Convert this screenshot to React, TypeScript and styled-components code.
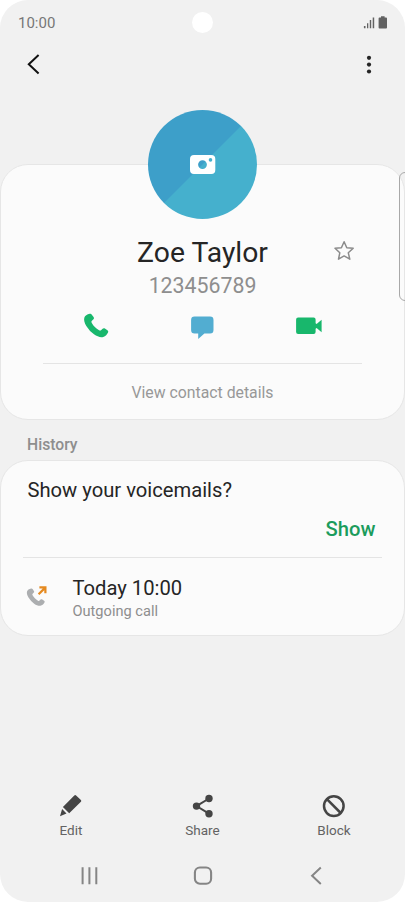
import React from 'react';
import styled, { createGlobalStyle } from 'styled-components';

const GlobalStyle = createGlobalStyle`
  * { box-sizing: border-box; }
  body { margin: 0; background: #fff; }
  svg { display: block; flex: none; }
  button { border: 0; padding: 0; background: none; font: inherit; color: inherit; display: block; }
`;

const Phone = styled.main`
  position: relative;
  display: flex;
  flex-direction: column;
  width: 405px;
  height: 902px;
  overflow: hidden;
  border-radius: 28px;
  background: #f1f1f1;
  font-family: Roboto, sans-serif;
  color: #252525;
`;

const StatusBar = styled.header`
  display: grid;
  grid-template-columns: 1fr 21px 1fr;
  align-items: center;
  height: 45px;
  padding: 0 18px;
`;

const CameraHole = styled.div`
  width: 21px;
  height: 21px;
  border-radius: 50%;
  background: #fff;
`;

const StatusIcons = styled.div`
  display: flex;
  justify-content: flex-end;
  margin-right: -1px;
`;

const Toolbar = styled.nav`
  display: flex;
  align-items: flex-start;
  justify-content: space-between;
  height: 119px;
  padding: 7px 28px 0 26px;
`;

const Card = styled.section<{ $height: number }>`
  display: flex;
  flex-direction: column;
  flex: none;
  height: ${p => p.$height}px;
  border: 1px solid #e6e6e6;
  border-radius: 28px;
  background: #fbfbfb;
`;

const Avatar = styled.button`
  && { display: flex; }
  align-self: center;
  align-items: center;
  justify-content: center;
  flex: none;
  width: 109px;
  height: 109px;
  margin-top: -55px;
  border-radius: 50%;
  background: linear-gradient(135deg, #3d9fc9 49.8%, #45b0cd 50.2%);
`;

const Text = styled.span<{ $size: number; $line: number; $color?: string; $weight?: number }>`
  display: block;
  white-space: nowrap;
  font-size: ${p => p.$size}px;
  line-height: ${p => p.$line}px;
  color: ${p => p.$color ?? '#252525'};
  font-weight: ${p => p.$weight ?? 400};
`;

const NameRow = styled.div`
  display: grid;
  grid-template-columns: 1fr auto 1fr;
  align-items: center;
  height: 36px;
  margin-top: 16px;
`;

const Favorite = styled.button`
  justify-self: end;
  margin: 0 49px 4px 0;
`;

const NumberRow = styled.div`
  display: flex;
  justify-content: center;
  height: 30px;
`;

const Actions = styled.div`
  display: flex;
  align-items: flex-start;
  justify-content: space-between;
  height: 62px;
  padding: 11px 81px 0 80px;
`;

const Divider = styled.hr<{ $left: number; $right: number }>`
  flex: none;
  width: auto;
  height: 1px;
  border: 0;
  margin: 0 ${p => p.$right}px 0 ${p => p.$left}px;
  background: #e4e4e4;
`;

const DetailsButton = styled.button`
  align-self: center;
  margin-top: 18px;
`;

const SectionTitle = styled.h2`
  height: 40px;
  margin: 0;
  padding: 14px 27px 0;
`;

const Prompt = styled.div`
  display: flex;
  flex-direction: column;
  height: 96px;
  padding: 17px 28.5px 0 26.5px;
`;

const ShowButton = styled.button`
  align-self: flex-end;
  margin-top: 15px;
`;

const CallRow = styled.div`
  display: flex;
  align-items: flex-start;
  padding: 17px 0 0 24px;
`;

const OutgoingBadge = styled.div`
  padding-top: 8px;
`;

const CallText = styled.div`
  margin-left: 23.5px;
`;

const BottomActions = styled.nav`
  display: grid;
  grid-template-columns: repeat(3, 131.5px);
  align-items: start;
  justify-content: center;
  height: 58px;
  margin-top: auto;
`;

const BottomAction = styled.button`
  && { display: flex; }
  flex-direction: column;
  align-items: center;
  gap: 2px;
`;

const SystemNav = styled.nav`
  display: grid;
  grid-template-columns: repeat(3, 113.5px);
  align-items: start;
  justify-content: center;
  justify-items: center;
  height: 50px;
  padding-top: 10px;
`;

const EdgeHandle = styled.div`
  position: absolute;
  top: 172px;
  right: -6px;
  width: 12px;
  height: 129px;
  border: 1.5px solid #a8a8a8;
  border-radius: 6px;
`;

const handset =
  'M5.6.3C6.6.1 7 .5 7.5 1.2l1.7 2.3c.6.9.5 1.6-.1 2.2L7.6 7.1c-.6.7-.6 1.3-.1 2.1 1.6 2.9 4 5.3 7 7 .8.5 1.5.4 2.1-.2l1.3-1.2c.7-.7 1.4-.7 2.2-.2l2.4 1.7c.8.6 1 1.2.6 2-.8 1.7-2.4 3.8-4.6 4.3-2.7.7-5.8-.3-8.9-2.5A29 29 0 0 1 2.2 12C.4 9.1-.3 6.4.3 4.2.9 2.2 2.9.8 5.6.3Z';

const StatusSignal = () => (
  <svg width="25" height="13" viewBox="0 0 25 13" fill="#626262">
    <path d="M.9 10h1.6v2.2H.9zM4 7.2h1.3v5H4zM6.8 4h1.4v8.2H6.8zM9.7 1.6h1.5v10.6H9.7z" />
    <path d="M18 .2h3.6v1.3h1.5c.6 0 .9.3.9.9v9.1c0 .6-.3.9-.9.9h-6.6c-.6 0-.9-.3-.9-.9V2.4c0-.6.3-.9.9-.9H18z" />
  </svg>
);

const BackIcon = () => (
  <svg width="16" height="24" viewBox="0 0 16 24" fill="none" stroke="#111" strokeWidth="2">
    <path d="m12.6 3-9.8 9.2 9.8 9.2" strokeLinejoin="miter" />
  </svg>
);

const MoreIcon = () => (
  <svg width="16" height="26" viewBox="0 0 16 26" fill="#252525">
    <circle cx="8" cy="5.8" r="2.1" /><circle cx="8" cy="12.6" r="2.1" /><circle cx="8" cy="19.5" r="2.1" />
  </svg>
);

const CameraIcon = () => (
  <svg width="26" height="19" viewBox="0 0 26 19">
    <path fill="#fff" fillRule="evenodd" d="M4 0h17.3q4 0 4 4v11q0 4-4 4H4q-4 0-4-4V4q0-4 4-4Zm8.5 5.2a4.4 4.4 0 1 0 0 8.8 4.4 4.4 0 0 0 0-8.8Zm8-2.1a1.8 1.8 0 1 0 0 3.6 1.8 1.8 0 0 0 0-3.6Z" />
  </svg>
);

const StarIcon = () => (
  <svg width="22" height="22" viewBox="0 0 22 22" fill="none" stroke="#8b8b8b" strokeWidth="1.5" strokeLinejoin="round">
    <path d="m11.1 1.7 2.7 6 6.4.6-4.9 4.5 1.5 6.4-5.7-3.3-5.6 3.3 1.3-6.4L2 8.3l6.4-.6z" />
  </svg>
);

const CallIcon = () => (
  <svg width="30" height="30" viewBox="0 0 30 30" fill="#18b76c"><path d={handset} transform="translate(3 1.4) scale(1.04)" /></svg>
);

const MessageIcon = () => (
  <svg width="30" height="30" viewBox="0 0 30 30" fill="#52add1">
    <path d="M7.5 4.6h15.6q3.4 0 3.4 3.4v10q0 3.6-3.4 3.6h-5.7L11.2 27v-5.4H7.5q-3.4 0-3.4-3.6V8q0-3.4 3.4-3.4Z" />
  </svg>
);

const VideoIcon = () => (
  <svg width="30" height="30" viewBox="0 0 30 30" fill="#18b76c">
    <path d="M5.1 5.4h15.5q2 0 2 2v3.8l1 .7L28.6 7.8v12.4L23.6 16l-1 .7v3.4q0 2-2 2H5.1q-2 0-2-2V7.4q0-2 2-2Z" />
  </svg>
);

const OutgoingIcon = () => (
  <svg width="24" height="26" viewBox="0 0 24 26">
    <path d={handset} fill="#acaeb0" transform="translate(1.8 5.2) scale(.77)" />
    <path d="m13.6 11.3 5.9-5.9M14.4 4.3h6v6" fill="none" stroke="#e58a20" strokeWidth="2.2" />
  </svg>
);

const EditIcon = () => (
  <svg width="24" height="24" viewBox="0 0 24 24" fill="#454545">
    <path d="m15.3 1.4q.9-.8 1.8 0l4.8 4.5q.9.9 0 1.8L10.2 19.2 3.9 13zM3.1 15.1l4.4 4.4L1 22.2z" />
  </svg>
);

const ShareIcon = () => (
  <svg width="24" height="24" viewBox="0 0 24 24">
    <path d="M18 4.5 5.5 12.1l12.5 7.6" fill="none" stroke="#454545" strokeWidth="2" />
    <g fill="#454545"><circle cx="18" cy="4.5" r="3.7" /><circle cx="5.5" cy="12.1" r="3.7" /><circle cx="18" cy="19.7" r="3.7" /></g>
  </svg>
);

const BlockIcon = () => (
  <svg width="24" height="24" viewBox="0 0 24 24" fill="none" stroke="#454545" strokeWidth="2.5">
    <circle cx="11.8" cy="12.1" r="9.8" /><path d="m4.9 5.2 13.8 13.8" />
  </svg>
);

const RecentsIcon = () => (
  <svg width="22" height="26" viewBox="0 0 22 26" stroke="#858585" strokeWidth="2">
    <path d="M4.6 5.2v17M11.4 5.2v17M18.3 5.2v17" />
  </svg>
);

const HomeIcon = () => (
  <svg width="22" height="26" viewBox="0 0 22 26" fill="none" stroke="#858585" strokeWidth="2.1">
    <rect x="2.9" y="5.5" width="16.2" height="16.3" rx="5" />
  </svg>
);

const SystemBackIcon = () => (
  <svg width="22" height="26" viewBox="0 0 22 26" fill="none" stroke="#858585" strokeWidth="2">
    <path d="m15.8 5.5-8.7 8.2 8.7 8.2" />
  </svg>
);

const bottomActions = [
  { label: 'Edit', Icon: EditIcon },
  { label: 'Share', Icon: ShareIcon },
  { label: 'Block', Icon: BlockIcon },
];

export default function App() {
  return (
    <>
      <GlobalStyle />
      <Phone>
        <StatusBar>
          <Text $size={15} $line={20} $color="#777">10:00</Text>
          <CameraHole />
          <StatusIcons><StatusSignal /></StatusIcons>
        </StatusBar>
        <Toolbar>
          <button aria-label="Back"><BackIcon /></button>
          <button aria-label="More options"><MoreIcon /></button>
        </Toolbar>
        <Card $height={256}>
          <Avatar aria-label="Change photo"><CameraIcon /></Avatar>
          <NameRow>
            <span />
            <Text $size={28.3} $line={36}>Zoe Taylor</Text>
            <Favorite aria-label="Favorite"><StarIcon /></Favorite>
          </NameRow>
          <NumberRow><Text $size={21.3} $line={30} $color="#8e8e8e">123456789</Text></NumberRow>
          <Actions>
            <button aria-label="Call"><CallIcon /></button>
            <button aria-label="Message"><MessageIcon /></button>
            <button aria-label="Video call"><VideoIcon /></button>
          </Actions>
          <Divider $left={42} $right={42} />
          <DetailsButton><Text $size={15.8} $line={22} $color="#989898">View contact details</Text></DetailsButton>
        </Card>
        <SectionTitle><Text $size={15.7} $line={22} $color="#8e8e8e" $weight={500}>History</Text></SectionTitle>
        <Card $height={176}>
          <Prompt>
            <Text $size={20.2} $line={24}>Show your voicemails?</Text>
            <ShowButton><Text $size={20.2} $line={24} $color="#1b9c5c" $weight={500}>Show</Text></ShowButton>
          </Prompt>
          <Divider $left={22} $right={22} />
          <CallRow>
            <OutgoingBadge><OutgoingIcon /></OutgoingBadge>
            <CallText>
              <Text $size={20.2} $line={26}>Today 10:00</Text>
              <Text $size={14.6} $line={20} $color="#8e8e8e">Outgoing call</Text>
            </CallText>
          </CallRow>
        </Card>
        <BottomActions>
          {bottomActions.map(({ label, Icon }) => (
            <BottomAction key={label}>
              <Icon />
              <Text $size={13.5} $line={20} $color="#636363">{label}</Text>
            </BottomAction>
          ))}
        </BottomActions>
        <SystemNav>
          <button aria-label="Recents"><RecentsIcon /></button>
          <button aria-label="Home"><HomeIcon /></button>
          <button aria-label="Back"><SystemBackIcon /></button>
        </SystemNav>
        <EdgeHandle />
      </Phone>
    </>
  );
}
